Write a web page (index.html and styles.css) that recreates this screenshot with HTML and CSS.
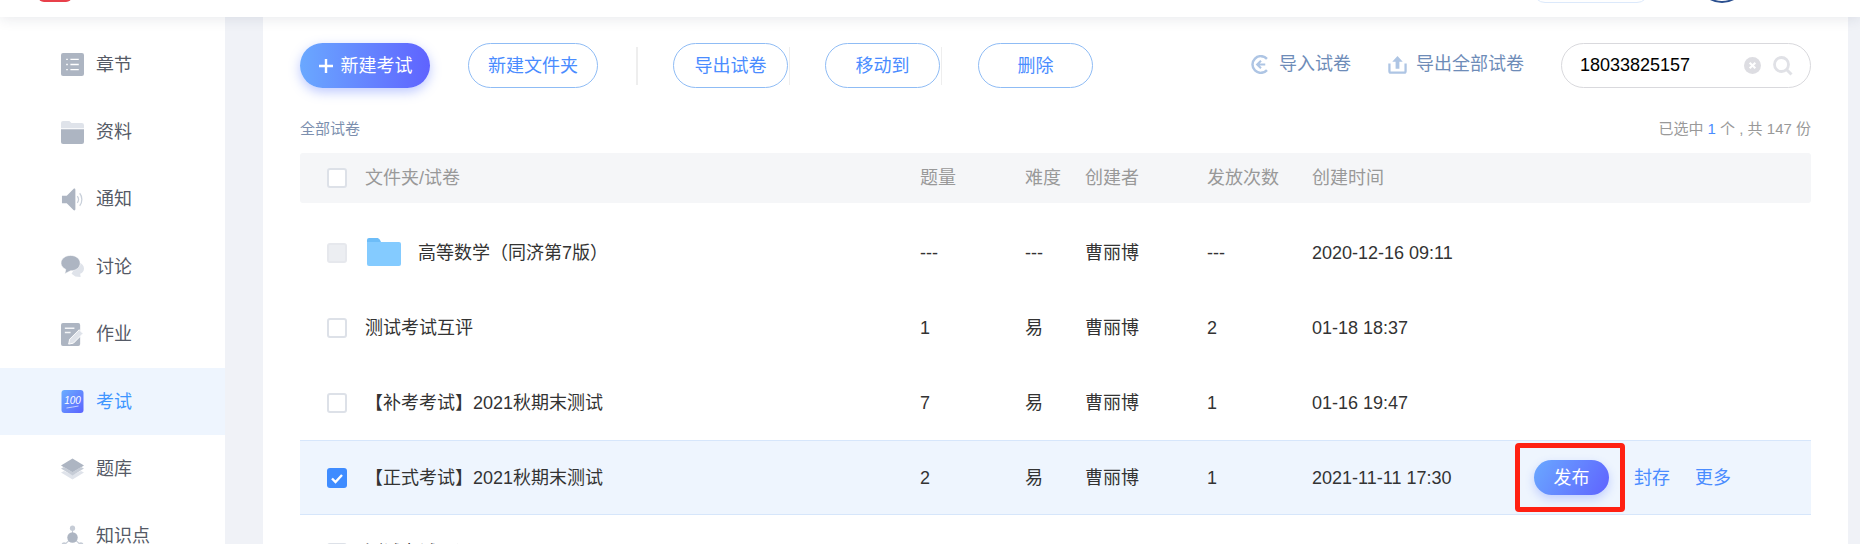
FILE: index.html
```html
<!DOCTYPE html>
<html lang="zh-CN">
<head>
    <meta charset="UTF-8">
    <title>考试</title>
    <link rel="stylesheet" href="styles.css">
</head>
<body>
    <div class="header">
        <div class="logo"></div>
        <div class="header-pill"></div>
        <div class="avatar"></div>
    </div>

    <div class="layout">
        <div class="sidebar">
            <a class="side-item">
                <svg class="side-icon" viewBox="0 0 22 22"><rect width="22" height="22" rx="2" fill="#adb5c2"/><path d="M5 6h1.500M5 11h1.500M5 16h1.500M9 6h8M9 11h8M9 16h8" stroke="#fff" stroke-width="1.200"/></svg>
                <span>章节</span>
            </a>
            <a class="side-item">
                <svg class="side-icon" viewBox="0 0 22 22"><path d="M0 2a2 2 0 0 1 2-2h6l2 2h10a2 2 0 0 1 2 2v3H0z" fill="#dfe3ea"/><path d="M0 8h22v12a2 2 0 0 1-2 2H2a2 2 0 0 1-2-2z" fill="#adb5c2"/></svg>
                <span>资料</span>
            </a>
            <a class="side-item">
                <svg class="side-icon" viewBox="0 0 22 24"><path d="M0 8h5l7-7c1-.8 2-.3 2 1v20c0 1.300-1 1.800-2 1l-7-7H0z" fill="#adb5c2"/><path d="M16 8.500c1.500 2 1.500 5 0 7M18.500 5.500c3 3.500 3 9.500 0 13" fill="none" stroke="#c9d0da" stroke-width="1.300"/></svg>
                <span>通知</span>
            </a>
            <a class="side-item">
                <svg class="side-icon" viewBox="0 0 24 23"><path d="M15 22l-4-3 7-12c4 1 6 3.500 6 6.500 0 2.500-1.500 4.500-4 5.500l.5 3.500z" fill="#dfe3ea"/><path d="M10 0c5.500 0 10 3.300 10 8s-4.500 8-10 8l-6 3 1-4.500C2 13 0 10.800 0 8c0-4.700 4.500-8 10-8z" fill="#adb5c2" stroke="#fff" stroke-width=".6"/></svg>
                <span>讨论</span>
            </a>
            <a class="side-item">
                <svg class="side-icon" viewBox="0 0 24 24"><rect width="20" height="24" rx="2" fill="#adb5c2"/><path d="M4 5.500h10M4 10h6" stroke="#f4f5f7" stroke-width="1.600"/><path d="M8 22l1-5 10-10 4 4-10 10z" fill="#dfe3ea" stroke="#fff" stroke-width="1"/></svg>
                <span>作业</span>
            </a>
            <a class="side-item active">
                <svg class="side-icon" viewBox="0 0 22 23">
                    <defs><linearGradient id="examGrad" x1="0" y1="0" x2="1" y2="1"><stop offset="0" stop-color="#6aaeff"/><stop offset="1" stop-color="#5b62ff"/></linearGradient></defs>
                    <rect width="22" height="23" rx="3" fill="url(#examGrad)"/>
                    <text x="11" y="13.500" class="exam-mark">100</text>
                    <path d="M5 18c4-.5 8-1.300 12-2" stroke="#dfe6ff" stroke-width=".8" fill="none"/>
                </svg>
                <span>考试</span>
            </a>
            <a class="side-item">
                <svg class="side-icon" viewBox="0 0 23 22"><path d="M0 14l3-1.500 8.500 4 8.500-4 3 1.500-11.500 7z" fill="#dfe3ea"/><path d="M11.500 0L23 7l-11.500 7L0 7z" fill="#adb5c2"/><path d="M0 10l3-1.500 8.500 5 8.500-5L23 10l-11.500 7z" fill="#c6ccd6"/></svg>
                <span>题库</span>
            </a>
            <a class="side-item">
                <svg class="side-icon" viewBox="0 0 22 22"><path d="M11 3v9M3 19l8-7 8 7" fill="none" stroke="#c6ccd6"/><circle cx="11" cy="3" r="2.500" fill="#c6ccd6"/><circle cx="11" cy="12" r="5" fill="#adb5c2"/><circle cx="3" cy="19" r="2.500" fill="#c6ccd6"/><circle cx="19" cy="19" r="2.500" fill="#c6ccd6"/></svg>
                <span>知识点</span>
            </a>
        </div>

        <div class="main">
            <div class="toolbar">
                <button class="btn btn-primary">
                    <svg class="plus" viewBox="0 0 14 14"><path d="M7 0v14M0 7h14" stroke="#fff" stroke-width="2.400"/></svg>
                    新建考试
                </button>
                <button class="btn btn-folder">新建文件夹</button>
                <i class="sep sep-first"></i>
                <button class="btn btn-small">导出试卷</button>
                <i class="sep"></i>
                <button class="btn btn-small">移动到</button>
                <i class="sep sep-last"></i>
                <button class="btn btn-small">删除</button>

                <div class="tool-right">
                    <a class="tool-link">
                        <svg class="tool-icon" viewBox="0 0 20 20"><path d="M16.800 4a8.800 8.800 0 1 0 0 12" fill="none" stroke="#aec5e4" stroke-width="2.600"/><path d="M15 10H7M10.500 6L6.500 10l4 4" fill="none" stroke="#aec5e4" stroke-width="2.200"/></svg>
                        导入试卷
                    </a>
                    <a class="tool-link">
                        <svg class="tool-icon" viewBox="0 0 20 20"><path d="M1.500 9v8c0 .8.700 1.500 1.500 1.500h14c.8 0 1.500-.7 1.500-1.500V9" fill="none" stroke="#aec5e4" stroke-width="2.400"/><path d="M10 1l5.500 6H12v7.500H8V7H4.500z" fill="#aec5e4"/></svg>
                        导出全部试卷
                    </a>
                    <div class="search">
                        <input class="search-input" type="text" value="18033825157">
                        <svg class="search-clear" viewBox="0 0 18 18"><circle cx="9" cy="9" r="9" fill="#dddde2"/><path d="M6 6l6 6M12 6l-6 6" stroke="#fff" stroke-width="2.200"/></svg>
                        <svg class="search-icon" viewBox="0 0 20 20"><circle cx="8.500" cy="8.500" r="7" fill="none" stroke="#e0e1e6" stroke-width="2.800"/><path d="M13.500 13.500l5 5" stroke="#e0e1e6" stroke-width="3"/></svg>
                    </div>
                </div>
            </div>

            <div class="info">
                <span class="crumb">全部试卷</span>
                <span>已选中 <b>1</b> 个 , 共 147 份</span>
            </div>

            <div class="row table-head">
                <div><i class="check"></i></div>
                <div>文件夹/试卷</div>
                <div>题量</div>
                <div>难度</div>
                <div>创建者</div>
                <div>发放次数</div>
                <div>创建时间</div>
            </div>

            <div class="table-body">
                <div class="row">
                    <div><i class="check check-disabled"></i></div>
                    <div class="name">
                        <svg class="folder" viewBox="0 0 34 28"><path d="M0 2a2 2 0 0 1 2-2h8c1 0 2 .5 3 2l1 2H0z" fill="#6dbdf8"/><path d="M0 4h32a2 2 0 0 1 2 2v20a2 2 0 0 1-2 2H2a2 2 0 0 1-2-2z" fill="#84cbff"/></svg>
                        高等数学（同济第7版）
                    </div>
                    <div>---</div>
                    <div>---</div>
                    <div>曹丽博</div>
                    <div>---</div>
                    <div>2020-12-16 09:11</div>
                </div>
                <div class="row">
                    <div><i class="check"></i></div>
                    <div>测试考试互评</div>
                    <div>1</div>
                    <div>易</div>
                    <div>曹丽博</div>
                    <div>2</div>
                    <div>01-18 18:37</div>
                </div>
                <div class="row">
                    <div><i class="check"></i></div>
                    <div>【补考考试】2021秋期末测试</div>
                    <div>7</div>
                    <div>易</div>
                    <div>曹丽博</div>
                    <div>1</div>
                    <div>01-16 19:47</div>
                </div>
                <div class="row row-selected">
                    <div>
                        <i class="check check-on">
                            <svg viewBox="0 0 20 20"><path d="M5 10.500l3.500 3.500L15 7" fill="none" stroke="#fff" stroke-width="2.400"/></svg>
                        </i>
                    </div>
                    <div>【正式考试】2021秋期末测试</div>
                    <div>2</div>
                    <div>易</div>
                    <div>曹丽博</div>
                    <div>1</div>
                    <div>2021-11-11 17:30</div>
                    <div class="ops">
                        <button class="btn-publish">发布</button>
                        <a class="op-link">封存</a>
                        <a class="op-link">更多</a>
                    </div>
                    <div class="red-mark"></div>
                </div>
                <div class="row">
                    <div><i class="check"></i></div>
                    <div>测试考试互评</div>
                </div>
            </div>
        </div>
    </div>
</body>
</html>
```

FILE: styles.css
```css
* {
    box-sizing: border-box;
}
html, body {
    height: 100%;
}
body {
    margin: 0;
    overflow: hidden;
    background: #f0f2f7;
    color: #333;
    font-family: "Liberation Sans", "Noto Sans CJK SC", sans-serif;
    font-size: 18px;
    line-height: 24px;
}
.header {
    position: relative;
    z-index: 2;
    display: flex;
    align-items: flex-end;
    height: 17px;
    overflow: hidden;
    background: #fff;
    box-shadow: 0 2px 14px rgba(30, 40, 70, .1);
}
.logo {
    flex: none;
    width: 34px;
    height: 30px;
    margin: 0 0 15px 38px;
    background: #e8404a;
    border-radius: 6px;
}
.header-pill {
    flex: none;
    width: 116px;
    height: 30px;
    margin: 0 0 14px auto;
    background: #fff;
    border: 1px solid #dce9fb;
    border-radius: 12px;
}
.avatar {
    flex: none;
    width: 50px;
    height: 50px;
    margin: 0 113px 14px 48px;
    border: 2px solid #2a4f8f;
    border-radius: 50%;
}
.layout {
    display: flex;
    height: calc(100vh - 17px);
    overflow: hidden;
}
.sidebar {
    flex: none;
    width: 225px;
    padding-top: 14px;
    background: #fff;
}
.side-item {
    display: flex;
    align-items: center;
    height: 67.4px;
    padding-left: 61px;
    color: #555a66;
}
.side-item.active {
    background: #eef5fe;
    color: #3f96ff;
}
.side-icon {
    flex: none;
    width: 23px;
    height: 23px;
    margin-right: 12px;
}
.exam-mark {
    fill: #fff;
    font-size: 10px;
    font-style: italic;
    text-anchor: middle;
}
.main {
    flex: 1;
    margin: 0 12px 0 38px;
    padding: 26px 37px 0;
    background: #fff;
}
.toolbar {
    display: flex;
    align-items: center;
    height: 45px;
}
.btn {
    flex: none;
    height: 45px;
    padding: 0;
    background: #fff;
    border: 1px solid #8fbcf5;
    border-radius: 23px;
    color: #4a8cff;
    font: inherit;
}
.btn-primary {
    width: 130px;
    padding-left: 2px;
    background: linear-gradient(90deg, #6aa8ff, #5f63ff);
    border: none;
    box-shadow: 0 4px 12px rgba(90, 120, 255, .4);
    color: #fff;
}
.plus {
    width: 14px;
    height: 14px;
    margin-right: 2px;
    vertical-align: -1px;
}
.btn-folder {
    width: 130px;
    margin-left: 38px;
}
.btn-small {
    width: 115px;
}
.sep {
    flex: none;
    width: 1px;
    height: 38px;
    margin: 0 35px 0 1px;
    background: #eee;
}
.sep-first {
    width: 2px;
    margin: 0 35px 0 38px;
}
.sep-last {
    margin-right: 36px;
}
.tool-right {
    display: flex;
    align-items: center;
    margin-left: auto;
}
.tool-link {
    display: flex;
    align-items: center;
    margin: 0 37px 3px 0;
    color: #6e8cb8;
}
.tool-icon {
    width: 19px;
    height: 19px;
    margin-right: 9px;
}
.search {
    display: flex;
    align-items: center;
    width: 250px;
    height: 45px;
    padding: 0 19px;
    border: 1px solid #d9d9dd;
    border-radius: 23px;
}
.search-input {
    flex: 1;
    min-width: 0;
    margin: 0 0 2px -1px;
    padding: 0;
    border: none;
    outline: none;
    color: #000;
    font: inherit;
}
.search-clear {
    flex: none;
    width: 17px;
    height: 17px;
    margin-right: 12px;
}
.search-icon {
    flex: none;
    width: 20px;
    height: 20px;
    margin-right: -2px;
}
.info {
    display: flex;
    justify-content: space-between;
    align-items: center;
    height: 20px;
    margin: 31px 0 14px;
    color: #999;
    font-size: 15px;
}
.info b {
    color: #4a8cff;
    font-weight: normal;
}
.crumb {
    color: #7c8fae;
}
.row {
    position: relative;
    display: grid;
    grid-template-columns: 65px 555px 105px 60px 122px 105px 222px 1fr;
    align-items: center;
    height: 75px;
}
.table-head {
    height: 50px;
    background: #f5f6f8;
    border-radius: 3px;
    color: #999;
}
.table-body {
    margin-top: 12px;
}
.row-selected {
    background: #eef5fe;
    border-top: 1px solid #d6e6fb;
    border-bottom: 1px solid #d6e6fb;
}
.check {
    display: block;
    width: 20px;
    height: 20px;
    margin-left: 27px;
    background: #fff;
    border: 2px solid #dde1e8;
    border-radius: 3px;
}
.check-disabled {
    background: #eceef2;
    border-color: #e6e8ed;
}
.check-on {
    background: #3f8cff;
    border: none;
}
.check-on svg {
    display: block;
}
.name {
    display: flex;
    align-items: center;
}
.folder {
    width: 34px;
    height: 28px;
    margin: -1px 17px 0 2px;
}
.ops {
    display: flex;
    align-items: center;
}
.btn-publish {
    flex: none;
    width: 75px;
    height: 35px;
    padding: 0;
    background: linear-gradient(120deg, #6aa8ff, #5f63ff);
    border: none;
    border-radius: 18px;
    box-shadow: 0 4px 10px rgba(90, 120, 255, .3);
    color: #fff;
    font: inherit;
}
.op-link {
    margin-left: 25px;
    color: #4a8cff;
}
.red-mark {
    position: absolute;
    top: 2px;
    left: 1215px;
    width: 110px;
    height: 69px;
    border: 5px solid #ff2012;
    border-radius: 4px;
}
```
